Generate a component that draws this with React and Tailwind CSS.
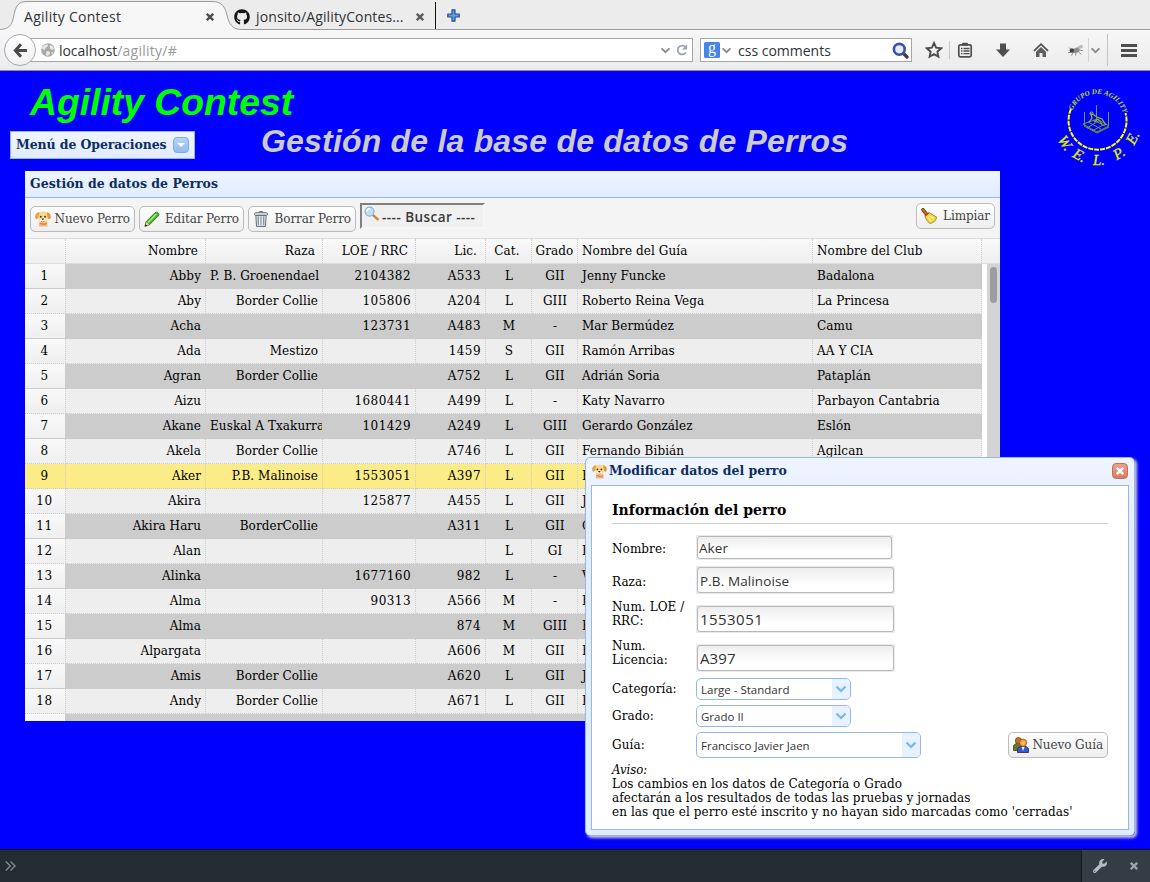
import { FaGithub, FaWrench } from 'react-icons/fa';

const ROWS = [
  ['Abby', 'P. B. Groenendael', '2104382', 'A533', 'L', 'GII', 'Jenny Funcke', 'Badalona'],
  ['Aby', 'Border Collie', '105806', 'A204', 'L', 'GIII', 'Roberto Reina Vega', 'La Princesa'],
  ['Acha', '', '123731', 'A483', 'M', '-', 'Mar Bermúdez', 'Camu'],
  ['Ada', 'Mestizo', '', '1459', 'S', 'GII', 'Ramón Arribas', 'AA Y CIA'],
  ['Agran', 'Border Collie', '', 'A752', 'L', 'GII', 'Adrián Soria', 'Pataplán'],
  ['Aizu', '', '1680441', 'A499', 'L', '-', 'Katy Navarro', 'Parbayon Cantabria'],
  ['Akane', 'Euskal A Txakurra', '101429', 'A249', 'L', 'GIII', 'Gerardo González', 'Eslón'],
  ['Akela', 'Border Collie', '', 'A746', 'L', 'GII', 'Fernando Bibián', 'Agilcan'],
  ['Aker', 'P.B. Malinoise', '1553051', 'A397', 'L', 'GII', 'F', ''],
  ['Akira', '', '125877', 'A455', 'L', 'GII', 'J', ''],
  ['Akira Haru', 'BorderCollie', '', 'A311', 'L', 'GII', 'C', ''],
  ['Alan', '', '', '', 'L', 'GI', 'F', ''],
  ['Alinka', '', '1677160', '982', 'L', '-', 'V', ''],
  ['Alma', '', '90313', 'A566', 'M', '-', 'F', ''],
  ['Alma', '', '', '874', 'M', 'GIII', 'F', ''],
  ['Alpargata', '', '', 'A606', 'M', 'GII', 'F', ''],
  ['Amis', 'Border Collie', '', 'A620', 'L', 'GII', 'J', ''],
  ['Andy', 'Border Collie', '', 'A671', 'L', 'GII', 'F', ''],
  ['', '', '', '', '', '', '', ''],
];

const COLS =
  'grid grid-cols-[41px_140px_117px_93px_70px_46px_46px_235px_169px]';

const ALIGN = [
  'text-right',
  'text-right',
  'text-right',
  'text-right',
  'text-center',
  'text-center',
  'text-left',
  'text-left',
];

function Chevron({ className }) {
  return (
    <svg className={className} viewBox="0 0 12 8" fill="none" stroke="currentColor" strokeWidth="2.200">
      <path d="M1.500 1.500 6 6l4.500-4.500" />
    </svg>
  );
}

function Cross({ className }) {
  return (
    <svg className={className} viewBox="0 0 8 8" fill="none" stroke="currentColor" strokeWidth="2.400">
      <path d="M.8.8l6.400 6.400M7.200.8.8 7.200" />
    </svg>
  );
}

function DogIcon({ className }) {
  return (
    <svg className={className} viewBox="0 0 16 16">
      <path d="M4.500 10 4 15.500h8.500L12 10z" fill="#f3b47c" />
      <path d="M4.700 12.300q3.500 1.600 7 .2" fill="none" stroke="#dd8047" strokeWidth="1.100" />
      <path d="M3 2.500Q5 .3 8.200.5q3.300 0 4.800 2.300 1 3-.5 6.200-1.700 3-4.200 3T4 9Q2.500 6 3 2.500z" fill="#fbd78e" />
      <path d="M4.600 1.300C2.500 1 .6 2.800.2 5c-.3 2 .8 3.500 1.900 3.200 1.500-.5 1.700-4.200 2.500-6.900z" fill="#e3a24a" />
      <path d="M11.800 1.300c2 0 3.800 1.800 4 4 .1 2-.9 3.200-1.900 2.900-1.500-.5-1.500-4.200-2.100-6.900z" fill="#df9a40" />
      <ellipse cx="7.800" cy="9" rx="2.800" ry="2.400" fill="#fff1d2" />
      <circle cx="5.800" cy="5.800" r=".95" fill="#4a3420" />
      <circle cx="10" cy="5.800" r=".95" fill="#4a3420" />
      <path d="M6.400 7.400h2.800L7.800 9.200z" fill="#33241a" />
      <path d="M6 10.400q1.800 1.300 3.600 0" fill="none" stroke="#b5793b" strokeWidth=".8" />
    </svg>
  );
}

function PencilIcon() {
  return (
    <svg className="size-4" viewBox="0 0 16 16">
      <path d="M1 15.200 2.300 10.500 11 1.800q1.500-1.300 3 .2t.2 3L5.500 13.700z" fill="#4fb62b" stroke="#1f7a17" strokeWidth=".9" />
      <path d="M4 11.400 12.300 3" stroke="#a9ec7e" strokeWidth="1.400" />
      <path d="M1 15.200 2.300 10.500l3.200 3.200z" fill="#f3d9a4" stroke="#8a6a35" strokeWidth=".6" />
      <path d="M.8 15.400 1.500 13l1.700 1.700z" fill="#222" />
    </svg>
  );
}

function TrashIcon() {
  return (
    <svg className="size-4" viewBox="0 0 16 16">
      <path d="M6 1.500q0-1 1-1h2q1 0 1 1" fill="none" stroke="#5c6570" />
      <rect x="1.500" y="1.700" width="13" height="2.600" rx="1" fill="#dfe5ea" stroke="#5c6570" strokeWidth=".9" />
      <path d="M2.800 4.500h10.400l-.7 11h-9z" fill="#d3d9df" stroke="#5c6570" strokeWidth=".9" />
      <path d="M5.300 5.500v8.500M8 5.500v8.500M10.700 5.500v8.500" stroke="#7b8692" strokeWidth="1" />
      <path d="M6.500 5.500v8.500M9.200 5.500v8.500" stroke="#f4f7fa" strokeWidth=".8" />
    </svg>
  );
}

function SearchIcon() {
  return (
    <svg className="size-4" viewBox="0 0 16 16">
      <path d="m9.300 9.300 4.500 4" stroke="#d9812c" strokeWidth="2.400" strokeLinecap="round" />
      <path d="m8.800 8.800 1.800 1.700" stroke="#8a8f98" strokeWidth="1.500" />
      <circle cx="5.600" cy="5.600" r="4.500" fill="#bfe0f8" stroke="#8eaecb" strokeWidth="1.100" />
      <path d="M2.700 5.200q.6-2.400 3.200-2.600" fill="none" stroke="#fff" strokeWidth="1.500" />
    </svg>
  );
}

function BroomIcon() {
  return (
    <svg className="size-4" viewBox="0 0 16 16">
      <path d="m2 1.800 3.300 4" stroke="#6e4210" strokeWidth="3.600" strokeLinecap="round" />
      <path d="m2 1.800 3 3.500" stroke="#b9792b" strokeWidth="1.800" strokeLinecap="round" />
      <path d="M3.800 8.500 8.300 4.800l7.200 4.200q-.3 5-6.500 6.500-3.500-2.500-5.200-7z" fill="#f0d744" stroke="#a57f1b" strokeWidth=".9" />
      <path d="m8.500 8 4.500 2.500M7 9.500l3 4" stroke="#fff6a4" strokeWidth="1.100" />
      <path d="M3.900 8 7.900 4.700" stroke="#d03a25" strokeWidth="1.400" />
    </svg>
  );
}

function PeopleIcon() {
  return (
    <svg className="size-4" viewBox="0 0 16 16">
      <path d="M.5 13.500v-5L3 6.500h5l2 3-3 4z" fill="#6b7a22" stroke="#39460f" strokeWidth=".8" />
      <circle cx="5.500" cy="3.700" r="3.200" fill="#b9722d" stroke="#7a4311" strokeWidth=".8" />
      <path d="M4.500 15.500v-4.200L7 9.500h6l2.500 2v4z" fill="#2f5fc0" stroke="#4a2363" strokeWidth=".9" />
      <path d="M8.500 9.800h3.200L10.100 14z" fill="#e6f0ff" />
      <circle cx="10" cy="5.700" r="3.600" fill="#f89b3a" stroke="#b14f10" strokeWidth=".9" />
      <circle cx="10.300" cy="6" r="1.900" fill="#fcc679" />
    </svg>
  );
}

function ClubLogo() {
  return (
    <svg className="h-[90px] w-[105px]" viewBox="0 0 105 90">
      <defs>
        <path id="ring-top" d="M27.500 30.500A27 27 0 0 1 78.500 34" />
      </defs>
      <path
        d="M26 29A29 29 0 1 0 80.500 33"
        fill="none"
        stroke="#ff0"
        strokeWidth="2"
        strokeDasharray="5 1"
      />
      <text className="font-[family-name:'Liberation_Serif',serif] text-[7px] font-bold italic" fill="#c4e000">
        <textPath href="#ring-top" textLength="66" lengthAdjust="spacing">GRUPO DE AGILITY</textPath>
      </text>
      <g
        className="font-[family-name:'Liberation_Serif',serif] text-[15px] italic"
        fill="#e2f000"
        stroke="#e2f000"
        strokeWidth=".3"
        textAnchor="middle"
      >
        <text x="54" y="84.500" transform="rotate(57 52.500 40.500)">W.</text>
        <text x="54" y="84.500" transform="rotate(29 52.500 40.500)">E.</text>
        <text x="54" y="84.500">L.</text>
        <text x="54" y="84.500" transform="rotate(-31 52.500 40.500)">P.</text>
        <text x="54" y="84.500" transform="rotate(-62 52.500 40.500)">E.</text>
      </g>
      <g fill="none" stroke="#6f9c38" strokeWidth="1">
        <path d="M39.500 32v14M51.500 25v16M63.500 32v14" />
        <path d="m38 44 14 8 12-6-12-7z" />
        <path d="m39 46 13 7 12-6M43 42l13 7M48 40l12 6M42 48l13-8M47 51l13-7" />
        <path d="m45 33 4 2 3 2 5 2 4 6M46 34l1 4-3 4M49 42l4-3 4 5" stroke="#8fb428" strokeWidth="1.200" />
        <circle cx="46.500" cy="33.500" r="1.500" stroke="#8fb428" />
      </g>
    </svg>
  );
}

function TabBar() {
  return (
    <div className="relative h-[30px] bg-[#ececec] font-[family-name:'Open_Sans',sans-serif] text-[14px] text-[#2e3436]">
      <svg className="absolute inset-0 h-[30px] w-full" viewBox="0 0 1150 30" preserveAspectRatio="none">
        <path
          d="M0 30C9 30 12.500 25 14 17 16 6 18.500 2 27 2H212C221.500 2 224.500 7 226.500 15 228.500 24 231.500 30 242 30H1150V31H0Z"
          fill="#f7f7f7"
        />
        <path
          d="M-1 29.500C9 29.500 12 25 13.500 17 15.500 6 18 1.500 27 1.500H212C222 1.500 225 7 227 15 229 24 232 29.500 242 29.500H1151"
          fill="none"
          stroke="#9a9c9a"
        />
      </svg>
      <div className="relative flex h-[30px] items-center pt-[3px]">
        <span className="w-[181px] pl-6 tracking-[.28px] whitespace-nowrap">Agility Contest</span>
        <Cross className="ml-[25px] size-2 text-[#4d4f4e]" />
        <FaGithub className="ml-5 size-4 text-[#151515]" />
        <span className="ml-[6px] w-[160px] tracking-[.12px] whitespace-nowrap">jonsito/AgilityContes...</span>
        <Cross className="size-2 text-[#5d5f5e]" />
        <span className="-mt-[3px] ml-[11px] h-[27px] w-px bg-[#111]" />
        <svg className="-mt-[3px] ml-[11px] size-[13px]" viewBox="0 0 13 13">
          <path d="M5 .8h3V5h4.200v3H8v4.200H5V8H.8V5H5z" fill="#6d9bd6" stroke="#1f4f9a" strokeWidth="1.200" strokeLinejoin="round" />
        </svg>
      </div>
    </div>
  );
}

function NavBar() {
  return (
    <div className="flex h-[41px] items-center border-b border-[#8c8c96] bg-linear-to-b from-[#f7f7f7] to-[#ebebeb] font-[family-name:'Open_Sans',sans-serif] text-[14px] text-[#2e3436]">
      <div className="z-10 ml-1 flex size-8 shrink-0 items-center justify-center rounded-full border border-[#a3a8b4] bg-linear-to-b from-white to-[#f1f1f1]">
        <svg className="size-[15px]" viewBox="0 0 15 15" fill="none" stroke="#4a4c4b" strokeWidth="3">
          <path d="M8 1.200 2.300 7.500 8 13.800M2.500 7.500H14" />
        </svg>
      </div>
      <div className="-ml-[6px] flex h-6 w-[663px] shrink-0 items-center border border-[#a5a7a5] bg-white pr-1 pl-[10px]">
        <svg className="size-[14px]" viewBox="0 0 14 14">
          <circle cx="7" cy="7" r="6.800" fill="#a9a9a9" />
          <path d="M1 4.500 3.500 2l3-.8.5 2-2.500 1.500L4 7 1.500 6zM8.500 2l3 1L13 6l-2 1-2-1.500zM5.500 8l3 .5.500 2L7 13l-2-.8zM10.500 9l2 .5-1.500 2.500z" fill="#e9e9e9" />
        </svg>
        <span className="mt-px ml-1 tracking-[-.05px]">localhost</span>
        <span className="mt-px flex-1 tracking-[.25px] text-[#979a99]">/agility/#</span>
        <Chevron className="h-[7px] w-[11px] text-[#8c8e8d]" />
        <svg className="ml-[5px] size-3" viewBox="0 0 12 12" fill="none" stroke="#9aa5b1" strokeWidth="1.800">
          <path d="M9.800 8.500A4.400 4.400 0 1 1 9.500 3.200" />
          <path d="M11 .5v5H6z" fill="#9aa5b1" stroke="none" />
        </svg>
      </div>
      <div className="ml-[7px] flex h-6 w-[212px] shrink-0 items-center border border-[#a5a7a5] bg-white px-[3px]">
        <svg className="size-4 overflow-visible" viewBox="0 0 16 16">
          <rect width="16" height="16" rx="1.500" fill="#4683ea" />
          <text x="8" y="11" textAnchor="middle" fill="#fff" className="font-[family-name:'Liberation_Serif',serif] text-[16px]">
            g
          </text>
        </svg>
        <Chevron className="ml-px h-[7px] w-[11px] text-[#8c8e8d]" />
        <span className="mt-px ml-[6px] flex-1">css comments</span>
        <svg className="-mr-px size-[17px]" viewBox="0 0 17 17">
          <path d="m11 11 4 4" stroke="#4a3b35" strokeWidth="3.400" strokeLinecap="round" />
          <circle cx="7.300" cy="7.300" r="5.400" fill="#e3ebfa" stroke="#3a52a6" strokeWidth="2.600" />
        </svg>
      </div>
      <svg className="ml-[13px] size-[18px]" viewBox="0 0 18 18">
        <path d="m9 2 2.100 4.700 5.100.6-3.800 3.400 1 5L9 13.200l-4.400 2.500 1-5L1.800 7.300l5.100-.6z" fill="none" stroke="#4d4f4e" strokeWidth="1.900" />
      </svg>
      <span className="ml-[6px] h-[18px] w-px bg-[#c4c6c8]" />
      <svg className="ml-[7px] size-4" viewBox="0 0 16 16">
        <rect x="1.800" y="2.800" width="12.400" height="12" rx="1.500" fill="none" stroke="#4d4f4e" strokeWidth="1.700" />
        <rect x="5" y=".7" width="6" height="3" rx="1" fill="#4d4f4e" />
        <path d="M4 6.500h1.500M4 9h1.500M4 11.700h1.500M6.500 6.500H12.500M6.500 9H12.500M6.500 11.700H12.500" stroke="#4d4f4e" strokeWidth="1.300" />
      </svg>
      <svg className="ml-[22px] size-4" viewBox="0 0 16 16">
        <path d="M5 1.500h6v6h4L8 15 1 7.500h4z" fill="#4d4f4e" />
      </svg>
      <svg className="ml-[22px] size-4" viewBox="0 0 16 16">
        <path d="M1 8.800 8 2.200l7 6.600" fill="none" stroke="#4d4f4e" strokeWidth="1.700" />
        <path d="M3 9.700 8 5l5 4.700V15H9.500v-4h-3v4H3z" fill="#5c5e5d" />
      </svg>
      <svg className="ml-[19px] h-3 w-4" viewBox="0 0 16 12">
        <path d="M7 4 14 .5l1 3L9 6z" fill="#b9bbba" />
        <ellipse cx="8" cy="6.500" rx="3.800" ry="2.300" fill="#8a8c8b" transform="rotate(-15 8 6.500)" />
        <circle cx="3.800" cy="6.500" r="2.200" fill="#3b3d3c" />
        <path d="M1 3.500 3.500 6M0 8.500h3M5 8.500 3.500 11.500M8 8.500l-.5 3M10.500 8l3 2.500M12 6l3 .8" stroke="#777" strokeWidth=".8" />
      </svg>
      <span className="ml-1 h-6 w-px bg-[#d4d4d6]" />
      <Chevron className="ml-px h-[7px] w-[11px] text-[#8c8e8d]" />
      <span className="ml-[6px] h-8 w-px bg-[#c2c4c8]" />
      <svg className="ml-[13px] h-[13px] w-4" viewBox="0 0 16 13">
        <path d="M0 1.500h16M0 6.500h16M0 11.500h16" stroke="#4d4f4e" strokeWidth="2.800" />
      </svg>
    </div>
  );
}

function ToolButton({ icon, children, className = '' }) {
  return (
    <button
      className={`flex h-[26px] items-center justify-between rounded-[5px] border border-[#bbb] bg-linear-to-b from-white to-[#eee] px-1 text-[12px] tracking-[-.09px] whitespace-nowrap text-[#444] ${className}`}
    >
      {icon}
      <span>{children}</span>
    </button>
  );
}

function GridRow({ cells, index }) {
  const odd = index % 2 === 0;
  const selected = index === 8;
  const bg = selected ? 'bg-[#fbec88]' : odd ? 'bg-[#ccc]' : 'bg-[#eee]';
  return (
    <div className={`${COLS} ${bg} h-[25px] shrink-0`}>
      <div
        className={`h-[25px] border-r border-b border-dotted border-[#ccc] pr-px text-center leading-[25px] tracking-[.500px] ${
          selected ? '' : 'bg-linear-to-b from-[#f9f9f9] to-[#efefef] bg-clip-padding'
        }`}
      >
        {index < 18 ? index + 1 : ''}
      </div>
      {cells.map((cell, i) => (
        <div
          key={i}
          className={`h-[25px] overflow-hidden border-r border-b border-dotted border-[#ccc] leading-[25px] whitespace-nowrap ${ALIGN[i]} ${
            i === 2 || i === 3 ? 'pr-[4px] pl-1 tracking-[.450px]' : i === 4 || i === 5 ? 'pl-px' : 'px-1'
          }`}
        >
          {cell}
        </div>
      ))}
    </div>
  );
}

function DogsPanel() {
  return (
    <section className="mt-3 ml-[25px] flex h-[550px] w-[975px] flex-col overflow-hidden bg-[#f4f4f4]">
      <div className="h-[27px] shrink-0 border-b border-[#95b8e7] bg-linear-to-b from-[#eff5ff] to-[#e0ecff] pl-[5px] text-[12.500px] leading-[25px] font-bold text-[#0e2d5f]">
        Gestión de datos de Perros
      </div>
      <div className="flex h-10 shrink-0 items-start px-[5px] pt-[5px]">
        <ToolButton className="mt-[3px] w-[105px]" icon={<DogIcon className="size-4" />}>
          Nuevo Perro
        </ToolButton>
        <ToolButton className="mt-[3px] ml-1 w-[105px]" icon={<PencilIcon />}>
          Editar Perro
        </ToolButton>
        <ToolButton className="mt-[3px] ml-1 w-[108px]" icon={<TrashIcon />}>
          Borrar Perro
        </ToolButton>
        <div className="ml-1 flex h-[26px] w-[125px] items-center border-2 border-t-[#808080] border-r-[#f6f6f6] border-b-[#f6f6f6] border-l-[#808080] bg-[#f0f0f0] pl-[2px] font-[family-name:'Open_Sans',sans-serif] text-[13.500px] font-semibold whitespace-nowrap text-[#3a3a3a]">
          <span className="mb-[5px]"><SearchIcon /></span>
          <span className="mt-[3px] ml-[2px] tracking-[.45px]">---- Buscar ----</span>
        </div>
        <div className="flex-1" />
        <ToolButton className="w-[79px]" icon={<BroomIcon />}>
          Limpiar
        </ToolButton>
      </div>
      <div
        className={`${COLS} h-[26px] shrink-0 border-y border-[#ddd] bg-linear-to-b from-[#f9f9f9] to-[#efefef] text-[12px] leading-6 tracking-[.08px] text-black`}
      >
        <div className="border-r border-dotted border-[#ccc]" />
        <div className="border-r border-dotted border-[#ccc] pr-[7px] text-right">Nombre</div>
        <div className="border-r border-dotted border-[#ccc] pr-[7px] text-right">Raza</div>
        <div className="border-r border-dotted border-[#ccc] pr-[7px] text-right">LOE / RRC</div>
        <div className="border-r border-dotted border-[#ccc] pr-2 text-right">Lic.</div>
        <div className="border-r border-dotted border-[#ccc] pr-[3px] text-center">Cat.</div>
        <div className="border-r border-dotted border-[#ccc] text-center">Grado</div>
        <div className="border-r border-dotted border-[#ccc] pl-1">Nombre del Guía</div>
        <div className="border-r border-dotted border-[#ccc] pl-1">Nombre del Club</div>
      </div>
      <div className="flex min-h-0 flex-1 bg-white text-[12px] tracking-[.08px] text-black">
        <div className="flex w-[957px] flex-col overflow-hidden">
          {ROWS.map((cells, i) => (
            <GridRow key={i} cells={cells} index={i} />
          ))}
        </div>
        <div className="ml-[5px] flex-1 bg-[#d4d4d4] px-[3px] pt-[3px]">
          <div className="h-9 w-[7px] rounded-full bg-[#9b9ea0]" />
        </div>
      </div>
    </section>
  );
}

function TextField({ label, value, rowClass, labelClass = '', boxClass }) {
  return (
    <div className={`flex items-center ${rowClass}`}>
      <label className={`w-[84px] leading-[14px] ${labelClass}`}>{label}</label>
      <div className="h-full bg-[#ebebeb] p-px">
        <div
          className={`flex h-full items-center rounded-[3px] border border-[#b8b8b8] bg-linear-to-b from-[#eee] to-white to-70% font-[family-name:'Open_Sans',sans-serif] text-[#333] ${boxClass}`}
        >
          {value}
        </div>
      </div>
    </div>
  );
}

function Combo({ value, className }) {
  return (
    <div
      className={`flex h-full items-center overflow-hidden rounded-[5px] border border-[#95b8e7] bg-white pl-1 font-[family-name:'Open_Sans',sans-serif] text-[11.500px] tracking-normal text-[#333] ${className}`}
    >
      <span className="flex-1 pt-[2px] whitespace-nowrap">{value}</span>
      <span className="flex h-full w-[18px] items-center justify-center bg-[#e8f1ff]">
        <Chevron className="h-2 w-3 text-[#74b8f0]" />
      </span>
    </div>
  );
}

function EditDialog() {
  return (
    <div className="absolute top-[386px] left-[585px] h-[379px] w-[550px] rounded-[5px] border border-[#95b8e7] bg-linear-to-b from-[#eff5ff] to-[#e0ecff] to-20% px-[5px] pb-[5px] shadow-[2px_2px_3px_#ccc]">
      <div className="flex h-[27px] items-center px-px">
        <DogIcon className="size-[15px]" />
        <span className="ml-[2px] flex-1 text-[12.500px] font-bold text-[#0e2d5f]">
          Modificar datos del perro
        </span>
        <span className="mb-px flex size-4 items-center justify-center rounded-[4px] border border-[#b5745e] bg-linear-to-b from-[#f0a088] to-[#d97c60]">
          <Cross className="size-2 text-white" />
        </span>
      </div>
      <div className="h-[345px] border border-[#95b8e7] bg-white px-5 text-[12px] tracking-[.08px] text-black">
        <h2 className="h-[38px] border-b border-[#ccc] pt-[13px] text-[14px] leading-[22px] font-bold tracking-[.05px]">
          Información del perro
        </h2>
        <TextField label="Nombre:" value="Aker" rowClass="mt-[11px] h-[25px]" labelClass="pt-[2px]" boxClass="w-[195px] pl-px pt-px text-[13.500px]" />
        <TextField label="Raza:" value="P.B. Malinoise" rowClass="mt-[6px] h-7" labelClass="pt-[3px]" boxClass="w-[197px] pl-[2px] pt-[2px] text-[13.500px] tracking-[.1px]" />
        <TextField
          label={<>Num. LOE /<br />RRC:</>}
          value="1553051"
          rowClass="mt-[11px] h-7"
          labelClass="mb-[10px]"
          boxClass="w-[197px] pl-[2px] pt-px text-[15px] tracking-[.450px]"
        />
        <TextField
          label={<>Num.<br />Licencia:</>}
          value="A397"
          rowClass="mt-[11px] h-7"
          labelClass="mb-[10px]"
          boxClass="w-[197px] pl-[2px] pt-px text-[15px]"
        />
        <div className="mt-[6px] flex h-[22px] items-center">
          <span className="w-[84px]">Categoría:</span>
          <Combo value="Large - Standard" className="w-[155px]" />
        </div>
        <div className="mt-[5px] flex h-[22px] items-center">
          <span className="w-[84px]">Grado:</span>
          <Combo value="Grado II" className="w-[155px]" />
        </div>
        <div className="mt-[5px] flex h-[26px] items-center">
          <span className="w-[84px]">Guía:</span>
          <Combo value="Francisco Javier Jaen" className="w-[225px]" />
          <div className="flex-1" />
          <ToolButton className="w-[100px]" icon={<PeopleIcon />}>
            Nuevo Guía
          </ToolButton>
        </div>
        <div className="mt-[5px] leading-[14px] whitespace-nowrap">
          <p className="font-[family-name:'DejaVu_Serif_Condensed',serif] text-[13px] leading-[14px] italic tracking-normal">Aviso:</p>
          <p>Los cambios en los datos de Categoría o Grado</p>
          <p>afectarán a los resultados de todas las pruebas y jornadas</p>
          <p>en las que el perro esté inscrito y no hayan sido marcadas como 'cerradas'</p>
        </div>
      </div>
    </div>
  );
}

export default function App() {
  return (
    <div className="flex h-[882px] w-[1150px] flex-col overflow-hidden font-[family-name:'DejaVu_Serif',serif]">
      <TabBar />
      <NavBar />
      <main className="relative h-[778px] bg-[#00f]">
        <header className="flex h-[88px] justify-between">
          <div>
            <h1 className="h-[60px] pt-[10px] pl-[30px] font-[family-name:'Liberation_Sans',sans-serif] text-[37.300px] leading-[43px] font-bold italic text-[#0f0]">
              Agility Contest
            </h1>
            <div className="flex h-7 items-center">
              <button className="ml-[10px] flex h-7 w-[185px] items-center justify-between border border-[#95b8e7] bg-linear-to-b from-[#eff5ff] to-[#e0ecff] px-[5px] text-[12.500px] font-bold tracking-[-.1px] text-[#0e2d5f]">
                <span>Menú de Operaciones</span>
                <span className="flex size-4 items-center justify-center rounded-[4px] border border-[#7fa9e0] bg-linear-to-b from-[#b6d2f8] to-[#93bcf0]">
                  <svg className="h-1 w-2" viewBox="0 0 8 4">
                    <path d="M0 0h8L4 4z" fill="#fff" />
                  </svg>
                </span>
              </button>
              <h2 className="-mt-[9px] ml-[66px] font-[family-name:'Liberation_Sans',sans-serif] text-[32px] leading-9 font-bold tracking-[.2px] whitespace-nowrap italic text-[#ccc]">
                Gestión de la base de datos de Perros
              </h2>
            </div>
          </div>
          <div className="mt-[9px] h-[79px] shrink-0">
            <ClubLogo />
          </div>
        </header>
        <DogsPanel />
        <EditDialog />
      </main>
      <footer className="flex h-[33px] items-center border-t border-[#0b0d10] bg-[#252b33]">
        <svg className="ml-[5px] h-[10px] w-[11px]" viewBox="0 0 11 10" fill="none" stroke="#858b91" strokeWidth="1.400">
          <path d="m.8.500 4.500 4.500L.8 9.500M5.500.5 10 5 5.500 9.500" />
        </svg>
        <div className="flex-1" />
        <div className="flex h-full w-[69px] items-center border-l border-[#171b20] bg-[#343c45] pl-[11px] text-[#b6bcc2]">
          <FaWrench className="size-[14px]" />
          <Cross className="ml-[23px] size-2 text-[#9aa1a8]" />
        </div>
      </footer>
    </div>
  );
}
